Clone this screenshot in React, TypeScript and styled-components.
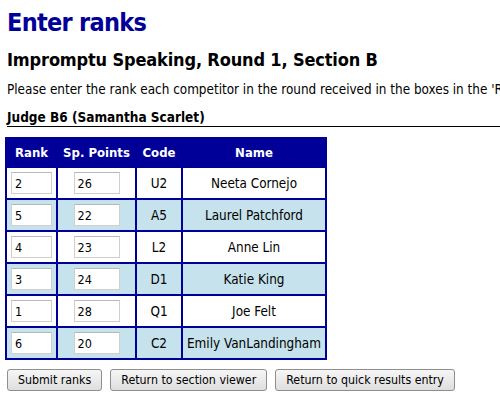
import React from "react";
import styled, { createGlobalStyle } from "styled-components";

const Global = createGlobalStyle`
  html, body { margin: 0; padding: 0; background: #fff; overflow: hidden; }
  body { font-family: "DejaVu Sans Condensed", "DejaVu Sans", Verdana, sans-serif; color: #000; }
`;

const Page = styled.div`
  padding: 0 5px;
  width: 600px;
`;

const Title = styled.h1`
  margin: 8px 0 0 2px;
  font-size: 25px;
  line-height: 30px;
  font-weight: bold;
  letter-spacing: -0.7px;
  color: #000099;
`;

const Subtitle = styled.h2`
  margin: 11px 0 0 2px;
  font-size: 18px;
  line-height: 22px;
  font-weight: bold;
  letter-spacing: -0.15px;
`;

const Intro = styled.p`
  margin: 11px 0 0 2px;
  font-size: 13.4px;
  line-height: 16px;
  white-space: nowrap;
`;

const JudgeHeading = styled.h4`
  margin: 11px 0 0 2px;
  font-size: 13.5px;
  line-height: 16px;
  font-weight: bold;
  padding-bottom: 1px;
  border-bottom: 1px solid #000;
  width: 510px;
`;

const Table = styled.table`
  margin-top: 10px;
  border-collapse: collapse;
  table-layout: fixed;
  border: 2px solid #000099;
`;

const HeadCell = styled.th<{ $w: number }>`
  width: ${(p) => p.$w}px;
  height: 27px;
  padding: 0;
  background: #000099;
  color: #fff;
  font-size: 13px;
  font-weight: bold;
  text-align: center;
  border: 2px solid #000099;
`;

const Row = styled.tr<{ $alt: boolean }>`
  background: ${(p) => (p.$alt ? "#c6e2ec" : "#fff")};
`;

const Cell = styled.td`
  height: 30px;
  padding: 0;
  text-align: center;
  font-size: 13.4px;
  border: 2px solid #000099;
`;

const NumInput = styled.input<{ $w: number }>`
  box-sizing: border-box;
  width: ${(p) => p.$w}px;
  height: 22px;
  margin: 0;
  padding: 0 3px;
  border: 1px solid #cfcfcf;
  border-top-color: #b8b8b8;
  background: #fff;
  font-family: inherit;
  font-size: 12.5px;
  color: #000;
  vertical-align: middle;
  outline: none;
`;

const Buttons = styled.div`
  display: flex;
  gap: 8px;
  margin: 9px 0 0 2px;
`;

const Button = styled.button`
  height: 22px;
  padding: 0 10px;
  border: 1px solid #8e8e8e;
  border-radius: 3px;
  background: linear-gradient(#f6f6f6, #dedede);
  font-family: inherit;
  font-size: 12.3px;
  color: #000;
`;

const rows = [
  { rank: "2", pts: "26", code: "U2", name: "Neeta Cornejo" },
  { rank: "5", pts: "22", code: "A5", name: "Laurel Patchford" },
  { rank: "4", pts: "23", code: "L2", name: "Anne Lin" },
  { rank: "3", pts: "24", code: "D1", name: "Katie King" },
  { rank: "1", pts: "28", code: "Q1", name: "Joe Felt" },
  { rank: "6", pts: "20", code: "C2", name: "Emily VanLandingham" },
];

export default function App() {
  return (
    <Page>
      <Global />
      <Title>Enter ranks</Title>
      <Subtitle>Impromptu Speaking, Round 1, Section B</Subtitle>
      <Intro>
        Please enter the rank each competitor in the round received in the boxes in the 'Rank' column below.
      </Intro>
      <JudgeHeading>Judge B6 (Samantha Scarlet)</JudgeHeading>
      <Table>
        <thead>
          <tr>
            <HeadCell $w={49}>Rank</HeadCell>
            <HeadCell $w={77}>Sp. Points</HeadCell>
            <HeadCell $w={44}>Code</HeadCell>
            <HeadCell $w={142}>Name</HeadCell>
          </tr>
        </thead>
        <tbody>
          {rows.map((r, i) => (
            <Row key={r.code} $alt={i % 2 === 1}>
              <Cell>
                <NumInput $w={41} defaultValue={r.rank} />
              </Cell>
              <Cell>
                <NumInput $w={46} defaultValue={r.pts} />
              </Cell>
              <Cell>{r.code}</Cell>
              <Cell>{r.name}</Cell>
            </Row>
          ))}
        </tbody>
      </Table>
      <Buttons>
        <Button>Submit ranks</Button>
        <Button>Return to section viewer</Button>
        <Button>Return to quick results entry</Button>
      </Buttons>
    </Page>
  );
}
